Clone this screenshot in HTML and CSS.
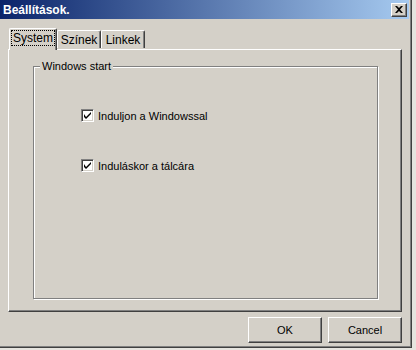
FILE: index.html
```html
<!DOCTYPE html>
<html>
<head>
<meta charset="utf-8">
<link rel="stylesheet" href="styles.css">
</head>
<body>
<div class="window">
  <div class="titlebar">
    <span class="title">Beállítások.</span>
    <span class="close"><svg width="8" height="7" viewBox="0 0 8 7"><path d="M0 0h2l2 2 2-2h2L5 3.5 8 7H6L4 5 2 7H0l3-3.5z" fill="#000"/></svg></span>
  </div>
  <div class="body">
    <div class="tabs">
      <div class="tab active"><span class="focus">System</span></div>
      <div class="tab">Színek</div>
      <div class="tab">Linkek</div>
    </div>
    <div class="panel">
      <div class="group">
        <span class="legend">Windows start</span>
        <div class="checks">
          <label class="check"><span class="box"><svg width="7" height="7" viewBox="0 0 7 7"><path d="M0 2v3l2 2 5-5V0L2 5z" fill="#000"/></svg></span>Induljon a Windowssal</label>
          <label class="check"><span class="box"><svg width="7" height="7" viewBox="0 0 7 7"><path d="M0 2v3l2 2 5-5V0L2 5z" fill="#000"/></svg></span>Induláskor a tálcára</label>
        </div>
      </div>
    </div>
    <div class="buttons">
      <div class="btn">OK</div>
      <div class="btn">Cancel</div>
    </div>
  </div>
</div>
</body>
</html>
```
FILE: styles.css
```css
html, body {
  margin: 0;
  padding: 0;
}
body {
  width: 416px;
  height: 350px;
  background: #e6e4df;
  font-family: "Liberation Sans", Arial, sans-serif;
  font-size: 11px;
  color: #000;
  overflow: hidden;
}
.window {
  width: 411px;
  height: 347px;
  background: #d4d0c8;
  border-right: 1px solid #404040;
  border-bottom: 1px solid #404040;
  box-shadow: inset -1px -1px 0 #808080;
  display: flex;
  flex-direction: column;
}
.titlebar {
  height: 19px;
  margin-right: 2px;
  background: linear-gradient(to right, #0a246a, #a6caf0);
  display: flex;
  align-items: center;
  justify-content: space-between;
  padding-left: 3px;
  padding-right: 2px;
}
.title {
  color: #fff;
  font-weight: bold;
  font-size: 12px;
}
.close {
  width: 16px;
  height: 14px;
  box-sizing: border-box;
  background: #d4d0c8;
  border-top: 1px solid #fff;
  border-left: 1px solid #fff;
  border-right: 1px solid #404040;
  border-bottom: 1px solid #404040;
  box-shadow: inset -1px -1px 0 #808080;
  display: flex;
  align-items: center;
  justify-content: center;
}
.body {
  display: flex;
  flex-direction: column;
  padding: 9px 0 0 8px;
}
.tabs {
  display: flex;
  align-items: flex-end;
  height: 21px;
  padding-left: 1px;
  position: relative;
  z-index: 1;
}
.tab {
  width: 44px;
  height: 18px;
  box-sizing: border-box;
  padding-top: 3px;
  text-align: center;
  font-size: 12px;
  line-height: 13px;
  border-top: 1px solid #fff;
  border-left: 1px solid #fff;
  border-right: 1px solid #404040;
  box-shadow: inset -1px 0 0 #808080;
  border-radius: 2px 2px 0 0;
  margin-bottom: 1px;
}
.tab.active {
  width: 48px;
  height: 22px;
  padding-top: 3px;
  margin-bottom: -1px;
  background: #d4d0c8;
}
.focus {
  outline: 1px dotted #000;
  padding: 0 1px;
}
.panel {
  width: 394px;
  height: 263px;
  box-sizing: border-box;
  border-top: 1px solid #fff;
  border-left: 1px solid #fff;
  border-right: 1px solid #404040;
  border-bottom: 1px solid #404040;
  box-shadow: inset -1px -1px 0 #808080;
  padding: 16px 0 0 24px;
}
.group {
  width: 345px;
  height: 233px;
  box-sizing: border-box;
  border: 1px solid #808080;
  box-shadow: inset 1px 1px 0 #fff, 1px 1px 0 #fff;
  position: relative;
  padding: 42px 0 0 47px;
}
.legend {
  position: absolute;
  left: 6px;
  top: -7px;
  background: #d4d0c8;
  padding: 0 2px;
  line-height: 13px;
}
.checks {
  display: flex;
  flex-direction: column;
  gap: 37px;
}
.check {
  display: flex;
  align-items: center;
  gap: 4px;
  height: 13px;
}
.box {
  width: 13px;
  height: 13px;
  box-sizing: border-box;
  background: #fff;
  border-top: 1px solid #808080;
  border-left: 1px solid #808080;
  border-right: 1px solid #fff;
  border-bottom: 1px solid #fff;
  box-shadow: inset 1px 1px 0 #404040, inset -1px -1px 0 #d4d0c8;
  display: flex;
  align-items: center;
  justify-content: center;
}
.buttons {
  display: flex;
  justify-content: flex-end;
  gap: 6px;
  width: 394px;
  margin-top: 5px;
}
.btn {
  width: 74px;
  height: 26px;
  box-sizing: border-box;
  border-top: 1px solid #fff;
  border-left: 1px solid #fff;
  border-right: 1px solid #404040;
  border-bottom: 1px solid #404040;
  box-shadow: inset -1px -1px 0 #808080;
  display: flex;
  align-items: center;
  justify-content: center;
}
```
